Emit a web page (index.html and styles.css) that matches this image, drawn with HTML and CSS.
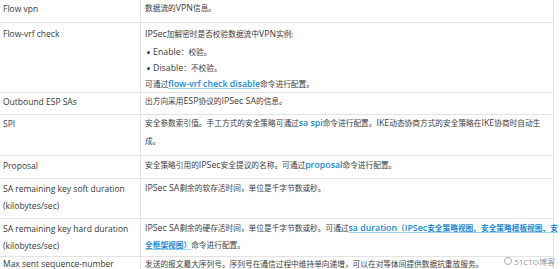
FILE: index.html
```html
<!DOCTYPE html>
<html lang="zh-CN">
<head>
<meta charset="utf-8">
<title>IPSec SA</title>
<link rel="stylesheet" href="styles.css">
</head>
<body>
<table class="param-table">
  <tbody>
    <tr>
      <td class="name">Flow vpn</td>
      <td class="desc">数据流的<span class="en">VPN</span>信息。</td>
    </tr>
    <tr class="multi">
      <td class="name">Flow-vrf check</td>
      <td class="desc">
        <p class="para"><span class="en">IPSec</span>加解密时是否校验数据流中<span class="en">VPN</span>实例:</p>
        <ul class="bullets">
          <li><span class="en">Enable</span>：校验。</li>
          <li><span class="en">Disable</span>：不校验。</li>
        </ul>
        <p class="para">可通过<a class="cmd ul"><span class="en">flow-vrf check disable</span></a>命令进行配置。</p>
      </td>
    </tr>
    <tr>
      <td class="name">Outbound ESP SAs</td>
      <td class="desc">出方向采用<span class="en">ESP</span>协议的<span class="en">IPSec SA</span>的信息。</td>
    </tr>
    <tr class="spi">
      <td class="name">SPI</td>
      <td class="desc">安全参数索引值。手工方式的安全策略可通过<a class="cmd"><span class="en">sa spi</span></a>命令进行配置。<span class="en">IKE</span>动态协商方式的安全策略在<span class="en">IKE</span>协商时自动生<br>成。</td>
    </tr>
    <tr class="roomy">
      <td class="name">Proposal</td>
      <td class="desc">安全策略引用的<span class="en">IPSec</span>安全提议的名称。可通过<a class="cmd"><span class="en">proposal</span></a>命令进行配置。</td>
    </tr>
    <tr class="roomy">
      <td class="name">SA remaining key soft duration<br>(kilobytes/sec)</td>
      <td class="desc"><span class="en">IPSec SA</span>剩余的软存活时间，单位是千字节数或秒。</td>
    </tr>
    <tr class="tight">
      <td class="name">SA remaining key hard duration<br>(kilobytes/sec)</td>
      <td class="desc"><span class="en">IPSec SA</span>剩余的硬存活时间，单位是千字节数或秒。可通过<a class="cmd ul"><span class="en">sa duration</span>（<span class="en">IPSec</span>安全策略视图、安全策略模板视图、安<br>全框架视图）</a>命令进行配置。</td>
    </tr>
    <tr class="last">
      <td class="name">Max sent sequence-number</td>
      <td class="desc">发送的报文最大序列号。序列号在通信过程中维持单向递增，可以在对等体间提供数据抗重放服务。</td>
    </tr>
  </tbody>
</table>
<div class="watermark"><span class="wm-icon"></span>51CTO博客</div>
</body>
</html>
```

FILE: styles.css
```css
html, body {
  margin: 0;
  padding: 0;
  background: #ffffff;
}

body {
  font-family: "Open Sans", "Noto Sans CJK SC", sans-serif;
  line-height: 17.5px;
  color: #3c3c3c;
  position: relative;
  height: 269px;
  overflow: hidden;
}

.param-table {
  border-collapse: collapse;
  width: 554px;
  margin-top: -1px;
  table-layout: fixed;
}

.param-table td {
  border-top: 1px solid #e3e3e3;
  border-bottom: 1px solid #e3e3e3;
  vertical-align: top;
  padding: 0 4px 4px 4px;
  white-space: nowrap;
}

.param-table td.name {
  width: 133px;
  padding-left: 3px;
  font-size: 8.5px;
  color: #383838;
  border-right: 1px solid #e3e3e3;
}

.param-table td.desc {
  font-size: 7.7px;
  border-right: 1px solid #e3e3e3;
}

.param-table tr.multi td {
  padding-top: 3px;
  padding-bottom: 0;
  line-height: 16px;
}

.param-table tr.spi td {
  padding-bottom: 5px;
}

.param-table tr.roomy td {
  padding-top: 1px;
  padding-bottom: 3px;
}

.param-table tr.tight td {
  padding-top: 1px;
  padding-bottom: 1px;
}

.param-table tr.last td {
  padding-top: 0;
  line-height: 14px;
}

.en {
  font-size: 8.8px;
  line-height: 1;
}

.para {
  margin: 0;
}

.bullets {
  margin: 2px 0 0 0;
  padding: 0 0 0 8px;
  list-style: none;
}

.bullets li {
  position: relative;
}

.bullets li::before {
  content: "";
  position: absolute;
  left: -6px;
  top: 7px;
  width: 3px;
  height: 3px;
  border-radius: 50%;
  background: #444;
}

.cmd {
  color: #1a8ad4;
  font-weight: 700;
  text-decoration: none;
}

.cmd .en {
  font-weight: 600;
}

.cmd.ul {
  text-decoration: underline;
  text-decoration-color: #9fd0ee;
}

.watermark {
  position: absolute;
  right: 5px;
  bottom: -1px;
  color: #9a9a9a;
  font-size: 8px;
  display: flex;
  align-items: center;
  gap: 2px;
}

.wm-icon {
  display: inline-block;
  width: 6px;
  height: 6px;
  border: 1px solid #aaa;
  border-radius: 50%;
}
```
